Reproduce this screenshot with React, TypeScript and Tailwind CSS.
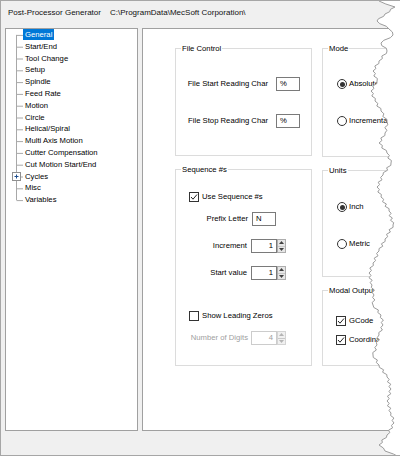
import React from "react";

const treeItems = [
  "General",
  "Start/End",
  "Tool Change",
  "Setup",
  "Spindle",
  "Feed Rate",
  "Motion",
  "Circle",
  "Helical/Spiral",
  "Multi Axis Motion",
  "Cutter Compensation",
  "Cut Motion Start/End",
  "Cycles",
  "Misc",
  "Variables",
];

const ROW = 11.8;

// key points of the torn right edge, roughened below
const tearKeys: [number, number][] = [
  [378, 0], [394, 6], [384, 13], [376, 20], [388, 28], [392, 34], [380, 42],
  [386, 50], [378, 60], [372, 70], [376, 80], [370, 90], [374, 100], [380, 110],
  [386, 121], [384, 132], [378, 142], [386, 152], [390, 162], [382, 174],
  [376, 186], [380, 196], [388, 210], [392, 224], [384, 238], [378, 250],
  [372, 262], [368, 272], [371, 284], [373, 294], [372, 304], [380, 314],
  [382, 324], [378, 334], [376, 344], [372, 354], [378, 364], [386, 376],
  [390, 388], [386, 400], [390, 412], [393, 422], [386, 434], [378, 444],
  [384, 450], [398, 456],
];

function tearPoints() {
  const pts: string[] = [];
  let k = 0;
  for (let i = 0; i < tearKeys.length - 1; i++) {
    const [x1, y1] = tearKeys[i];
    const [x2, y2] = tearKeys[i + 1];
    const steps = Math.max(2, Math.round((y2 - y1) / 2.5));
    for (let s = 0; s < steps; s++) {
      const t = s / steps;
      const jitter = k % 2 === 0 ? 1.4 : -1.2;
      pts.push(`${(x1 + (x2 - x1) * t + (s === 0 ? 0 : jitter)).toFixed(1)},${(y1 + (y2 - y1) * t).toFixed(1)}`);
      k++;
    }
  }
  const last = tearKeys[tearKeys.length - 1];
  pts.push(`${last[0]},${last[1]}`);
  return pts;
}

function TornEdge() {
  const pts = tearPoints();
  return (
    <svg className="absolute left-0 top-0 pointer-events-none" width="400" height="456">
      <polygon points={[...pts, "400,456", "400,0"].join(" ")} fill="#ffffff" />
      <polyline points={pts.join(" ")} fill="none" stroke="#9c9c9c" strokeWidth="1" />
    </svg>
  );
}

function Tree() {
  const c = (i: number) => ROW / 2 + i * ROW;
  return (
    <div className="relative">
      <svg className="absolute left-0 top-0" width="24" height="190">
        <line x1="10.5" y1={c(0)} x2="10.5" y2={c(14)} stroke="#a8a8a8" />
        {treeItems.map((_, i) => (
          <line key={i} x1={i === 12 ? 15 : 10.5} y1={c(i) + 0.5} x2="17" y2={c(i) + 0.5} stroke="#a8a8a8" />
        ))}
        <rect x="6.5" y={c(12) - 4} width="8" height="8" fill="#ffffff" stroke="#8f8f8f" />
        <line x1="8.5" y1={c(12)} x2="12.5" y2={c(12)} stroke="#1f4f8f" />
        <line x1="10.5" y1={c(12) - 2} x2="10.5" y2={c(12) + 2} stroke="#1f4f8f" />
      </svg>
      {treeItems.map((t, i) => (
        <div key={t} className="h-[11.8px] flex items-center pl-[17px] leading-none">
          <span
            className={
              i === 0
                ? "bg-[#0078d7] text-white px-[2px] h-[11px] flex items-center"
                : "px-[2px] text-black h-[11px] flex items-center"
            }
          >
            {t}
          </span>
        </div>
      ))}
    </div>
  );
}

function Group({
  label,
  className,
  children,
}: {
  label: string;
  className: string;
  children?: React.ReactNode;
}) {
  return (
    <div className={`relative border border-[#dcdcdc] ${className}`}>
      <span className="absolute left-[5px] -top-[6px] bg-white px-[1px] leading-[11px]">{label}</span>
      {children}
    </div>
  );
}

function TextBox({ value, w, right, disabled }: { value: string; w: string; right?: boolean; disabled?: boolean }) {
  return (
    <div
      className={`${w} h-[14px] flex items-center px-[3px] border bg-white ${right ? "justify-end" : "justify-start"} ${
        disabled ? "border-[#cccccc] text-[#a0a0a0]" : "border-[#7a7a7a] text-black"
      }`}
    >
      {value}
    </div>
  );
}

function Spinner({ disabled }: { disabled?: boolean }) {
  const fill = disabled ? "#b4b4b4" : "#404040";
  return (
    <div
      className={`w-[9px] h-[14px] flex flex-col border ${
        disabled ? "border-[#d4d4d4] bg-[#f0f0f0]" : "border-[#adadad] bg-[#e6e6e6]"
      }`}
    >
      <div className="flex-1 flex items-center justify-center border-b border-[#c8c8c8]">
        <svg width="5" height="3">
          <polygon points="0,3 5,3 2.5,0" fill={fill} />
        </svg>
      </div>
      <div className="flex-1 flex items-center justify-center">
        <svg width="5" height="3">
          <polygon points="0,0 5,0 2.5,3" fill={fill} />
        </svg>
      </div>
    </div>
  );
}

function Check({ checked }: { checked?: boolean }) {
  return (
    <div className="w-[10px] h-[10px] border border-[#333333] bg-white flex items-center justify-center">
      {checked && (
        <svg width="8" height="8" viewBox="0 0 8 8">
          <polyline points="1,4 3,6.2 7,1.5" fill="none" stroke="#222222" strokeWidth="1" />
        </svg>
      )}
    </div>
  );
}

function Radio({ checked }: { checked?: boolean }) {
  return (
    <div className="w-[10px] h-[10px] rounded-full border border-[#333333] bg-white flex items-center justify-center">
      {checked && <div className="w-[5px] h-[5px] rounded-full bg-[#333333]" />}
    </div>
  );
}

export default function App() {
  return (
    <div className="relative w-[400px] h-[456px] overflow-hidden bg-[#f0f0f0] border-l border-t border-b border-[#a6a6a6] font-['Liberation_Sans',Arial,sans-serif] text-[7.7px] text-black">
      <div className="h-[27px] flex items-center pl-[7px] pb-[3px] text-[8px] text-[#111111]">
        <span>Post-Processor Generator</span>
        <span className="ml-[9px]">{"C:\\ProgramData\\MecSoft Corporation\\"}</span>
      </div>

      <div className="flex gap-[4px] pl-[4px] h-[403px]">
        <div className="w-[133px] bg-white border border-[#a0a0a0]">
          <Tree />
        </div>

        <div className="flex-1 bg-white border border-[#a0a0a0] overflow-hidden">
          <div className="flex gap-[10px] pl-[32px] pt-[19px] w-[340px]">
            <div className="flex flex-col gap-[13px] w-[137px] shrink-0">
              <Group label="File Control" className="h-[108px] pt-[28px] flex flex-col gap-[23px]">
                <div className="h-[14px] flex items-center">
                  <div className="w-[92px] text-right leading-none">File Start Reading Char</div>
                  <div className="ml-[8px]">
                    <TextBox value="%" w="w-[24px]" />
                  </div>
                </div>
                <div className="h-[14px] flex items-center">
                  <div className="w-[92px] text-right leading-none">File Stop Reading Char</div>
                  <div className="ml-[8px]">
                    <TextBox value="%" w="w-[24px]" />
                  </div>
                </div>
              </Group>

              <Group label="Sequence #s" className="h-[197px] pt-[21px] flex flex-col">
                <div className="h-[12px] flex items-center pl-[13px] gap-[3px] leading-none">
                  <Check checked />
                  <span>Use Sequence #s</span>
                </div>
                <div className="h-[14px] mt-[9px] flex items-center">
                  <div className="w-[72px] text-right leading-none">Prefix Letter</div>
                  <div className="ml-[4px]">
                    <TextBox value="N" w="w-[24px]" />
                  </div>
                </div>
                <div className="h-[14px] mt-[13px] flex items-center">
                  <div className="w-[71px] text-right leading-none">Increment</div>
                  <div className="ml-[4px] flex">
                    <TextBox value="1" w="w-[26px]" right />
                    <Spinner />
                  </div>
                </div>
                <div className="h-[14px] mt-[13px] flex items-center">
                  <div className="w-[71px] text-right leading-none">Start value</div>
                  <div className="ml-[4px] flex">
                    <TextBox value="1" w="w-[26px]" right />
                    <Spinner />
                  </div>
                </div>
                <div className="h-[12px] mt-[30px] flex items-center pl-[13px] gap-[3px] leading-none">
                  <Check />
                  <span>Show Leading Zeros</span>
                </div>
                <div className="h-[14px] mt-[9px] flex items-center">
                  <div className="w-[72px] text-right leading-none text-[#a0a0a0]">Number of Digits</div>
                  <div className="ml-[3px] flex">
                    <TextBox value="4" w="w-[26px]" right disabled />
                    <Spinner disabled />
                  </div>
                </div>
              </Group>
            </div>

            <div className="flex flex-col gap-[13px] w-[137px] shrink-0">
              <Group label="Mode" className="h-[109px] pt-[29px] pl-[14px] flex flex-col gap-[25px]">
                <div className="h-[12px] flex items-center gap-[2px] leading-none">
                  <Radio checked />
                  <span>Absolute</span>
                </div>
                <div className="h-[12px] flex items-center gap-[2px] leading-none">
                  <Radio />
                  <span>Incremental</span>
                </div>
              </Group>

              <Group label="Units" className="h-[107px] pt-[30px] pl-[14px] flex flex-col gap-[25px]">
                <div className="h-[12px] flex items-center gap-[2px] leading-none">
                  <Radio checked />
                  <span>Inch</span>
                </div>
                <div className="h-[12px] flex items-center gap-[2px] leading-none">
                  <Radio />
                  <span>Metric</span>
                </div>
              </Group>

              <Group label="Modal Output" className="h-[76px] pt-[24px] pl-[13px] flex flex-col gap-[7px]">
                <div className="h-[12px] flex items-center gap-[3px] leading-none">
                  <Check checked />
                  <span>GCode</span>
                </div>
                <div className="h-[12px] flex items-center gap-[3px] leading-none">
                  <Check checked />
                  <span>Coordinates</span>
                </div>
              </Group>
            </div>
          </div>
        </div>
      </div>

      <TornEdge />
    </div>
  );
}
